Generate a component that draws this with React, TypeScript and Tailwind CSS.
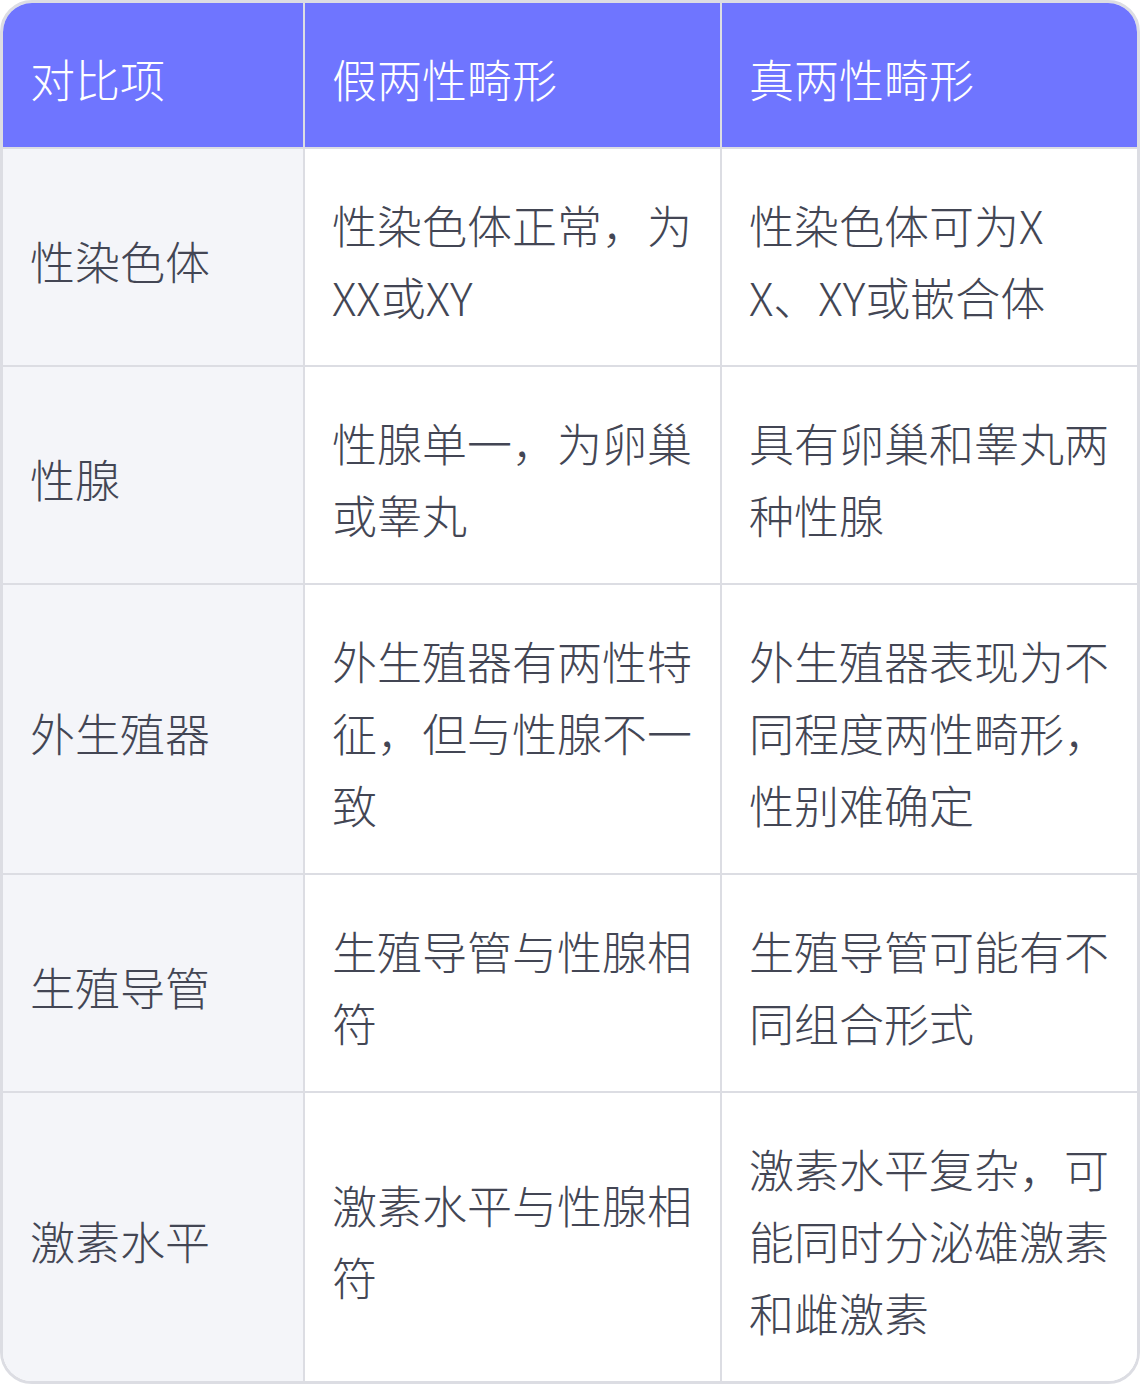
import React from "react";

const rows: [string, string, string][] = [
  ["性染色体", "性染色体正常，为XX或XY", "性染色体可为XX、XY或嵌合体"],
  ["性腺", "性腺单一，为卵巢或睾丸", "具有卵巢和睾丸两种性腺"],
  ["外生殖器", "外生殖器有两性特征，但与性腺不一致", "外生殖器表现为不同程度两性畸形，性别难确定"],
  ["生殖导管", "生殖导管与性腺相符", "生殖导管可能有不同组合形式"],
  ["激素水平", "激素水平与性腺相符", "激素水平复杂，可能同时分泌雄激素和雌激素"],
];

const font = { fontFamily: '"Noto Sans CJK SC", "Noto Sans", sans-serif' };

export default function App() {
  return (
    <div className="w-[1140px] bg-white" style={font}>
      <div className="border-[3px] border-[#dcdde3] rounded-[32px] overflow-hidden">
        <div className="grid grid-cols-[302px_417px_1fr] text-[45px] leading-[72px] font-light break-all">
          {/* header */}
          <div className="bg-[#6f75ff] text-white px-[27px] pt-[40px] pb-[32px] border-r-2 border-b-2 border-[#dcdde3]">对比项</div>
          <div className="bg-[#6f75ff] text-white px-[27px] pt-[40px] pb-[32px] border-r-2 border-b-2 border-[#dcdde3]">假两性畸形</div>
          <div className="bg-[#6f75ff] text-white px-[27px] pt-[40px] pb-[32px] border-b-2 border-[#dcdde3]">真两性畸形</div>

          {rows.map((r, i) => {
            const last = i === rows.length - 1;
            const bb = last ? "" : " border-b-2";
            return (
              <React.Fragment key={i}>
                <div className={"bg-[#f4f5f9] text-[#434654] px-[27px] pt-[40px] pb-[32px] flex items-center border-r-2 border-[#dcdde3]" + bb}>
                  {r[0]}
                </div>
                <div className={"bg-white text-[#434654] px-[27px] pt-[40px] pb-[32px] flex items-center border-r-2 border-[#dcdde3]" + bb}>
                  <span>{r[1]}</span>
                </div>
                <div className={"bg-white text-[#434654] pl-[27px] pr-[26px] pt-[40px] pb-[32px] flex items-center border-[#dcdde3]" + bb}>
                  <span>{r[2]}</span>
                </div>
              </React.Fragment>
            );
          })}
        </div>
      </div>
    </div>
  );
}
